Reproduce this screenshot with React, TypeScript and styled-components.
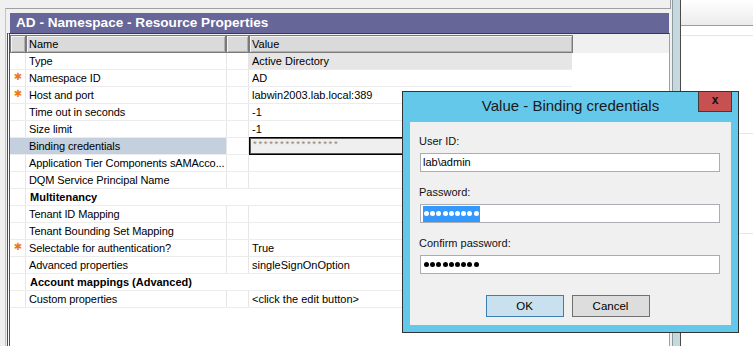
import styled, { createGlobalStyle } from "styled-components";

const GlobalStyle = createGlobalStyle`
  html, body {
    margin: 0;
    padding: 0;
  }
  body {
    font-family: "Liberation Sans", Arial, sans-serif;
    font-size: 11px;
    color: #000;
    background: #f0f0f0;
  }
`;

type Row = {
  name?: string;
  value?: string;
  group?: string;
  required?: boolean;
  readOnly?: boolean;
  selected?: boolean;
};

const ROWS: Row[] = [
  { name: "Type", value: "Active Directory", readOnly: true },
  { name: "Namespace ID", value: "AD", required: true },
  { name: "Host and port", value: "labwin2003.lab.local:389", required: true },
  { name: "Time out in seconds", value: "-1" },
  { name: "Size limit", value: "-1" },
  { name: "Binding credentials", value: "****************", selected: true },
  { name: "Application Tier Components sAMAcco..." },
  { name: "DQM Service Principal Name" },
  { group: "Multitenancy" },
  { name: "Tenant ID Mapping" },
  { name: "Tenant Bounding Set Mapping" },
  { name: "Selectable for authentication?", value: "True", required: true },
  { name: "Advanced properties", value: "singleSignOnOption" },
  { group: "Account mappings (Advanced)" },
  { name: "Custom properties", value: "<click the edit button>" },
];

const Screen = styled.div`
  position: relative;
  width: 753px;
  height: 346px;
  overflow: hidden;
  display: flex;
  background: #f0f0f0;
`;

const LeftPane = styled.div`
  width: 672px;
  display: flex;
  flex-direction: column;
`;

const TopStrip = styled.div`
  height: 8px;
  width: 670px;
  border-right: 1px solid #a0a0a0;
`;

const Panel = styled.div`
  flex: 1;
  margin-left: 5px;
  margin-right: 1px;
  padding: 4px 0 0 1px;
  border-top: 1px solid #a0a0a0;
  border-left: 1px solid #c4c4c4;
  display: flex;
  flex-direction: column;
  min-height: 0;
`;

const TitleBar = styled.div`
  height: 20px;
  margin: 0 2px 0 3px;
  padding-left: 6px;
  background: #666699;
  color: #fff;
  font-weight: bold;
  font-size: 13.6px;
  line-height: 20px;
`;

const Table = styled.div`
  flex: 1;
  margin-right: 1px;
  border-top: 1px solid #3c3c3c;
  border-left: 3px double #505050;
  border-right: 1px solid #a0a0a0;
  background: #fff;
`;

const HeaderRow = styled.div`
  display: flex;
  height: 19px;
  padding-top: 1px;
  box-sizing: border-box;
  background: #f0f0f0;
`;

const HeaderCell = styled.div<{ $w: number }>`
  width: ${(p) => p.$w}px;
  box-sizing: border-box;
  border: 1px solid #7a7a7a;
  box-shadow: inset 1px 1px 0 #f4f4f4, inset -1px -1px 0 #b0b0b0;
  background: #dadada;
  padding-left: 2px;
  line-height: 16px;
`;

const BodyRow = styled.div`
  display: flex;
  width: 562px;
  height: 17px;
  box-sizing: border-box;
  border-bottom: 1px solid #ececec;
`;

const Indicator = styled.div<{ $selected?: boolean }>`
  width: 16px;
  box-sizing: border-box;
  border-right: 1px solid ${(p) => (p.$selected ? "#c4d0dd" : "#e6e6e6")};
  background: ${(p) => (p.$selected ? "#c4d0dd" : "transparent")};
  color: #f27a12;
  font-family: "DejaVu Sans", sans-serif;
  font-size: 10px;
  line-height: 14px;
  text-align: center;
  padding-left: 1px;
`;

const NameCell = styled.div<{ $selected?: boolean }>`
  width: 201px;
  box-sizing: border-box;
  border-right: 1px solid #e6e6e6;
  background: ${(p) => (p.$selected ? "#c4d0dd" : "transparent")};
  padding-left: 3px;
  line-height: 16px;
  letter-spacing: -0.1px;
  white-space: nowrap;
  overflow: hidden;
`;

const SpacerCell = styled.div`
  width: 22px;
  box-sizing: border-box;
  border-right: 1px solid #e6e6e6;
`;

const ValueCell = styled.div<{ $readOnly?: boolean }>`
  width: 323px;
  box-sizing: border-box;
  background: ${(p) => (p.$readOnly ? "#e6e6e6" : "transparent")};
  padding-left: 3px;
  line-height: 16px;
  white-space: nowrap;
  overflow: hidden;
`;

const SecretCell = styled.div`
  width: 323px;
  height: 18px;
  margin-top: -1px;
  box-sizing: border-box;
  border: 1px solid #000;
  box-shadow: inset 0 0 0 1px #5a5a5a;
  background: #efefef;
  padding-left: 3px;
  color: #948573;
  font-size: 9.5px;
  letter-spacing: 1.7px;
  line-height: 12px;
`;

const GroupCell = styled.div`
  flex: 1;
  padding-left: 4px;
  font-weight: bold;
  line-height: 16px;
`;

const Splitter = styled.div`
  width: 7px;
  background: #c4d8de;
  border-left: 1px solid #8c9a9e;
  border-right: 1px solid #4a4a4a;
`;

const RightPane = styled.div`
  flex: 1;
  display: flex;
  flex-direction: column;
  background: #fff;
`;

const RightHeader = styled.div`
  height: 26px;
  box-sizing: border-box;
  border-bottom: 1px solid #9c9c9c;
  background: linear-gradient(#ffffff, #ebebeb);
`;

const ListLine = styled.div<{ $gap: number }>`
  margin-top: ${(p) => p.$gap}px;
  height: 1px;
  background: #dbe8f5;
`;

const Dialog = styled.div`
  position: absolute;
  left: 402px;
  top: 91px;
  width: 337px;
  height: 242px;
  box-sizing: border-box;
  border: 1px solid #333;
  background: #64c8ea;
  display: flex;
  flex-direction: column;
`;

const DialogTitle = styled.div`
  height: 30px;
  display: grid;
  grid-template-columns: 1fr auto 1fr;
  align-items: start;
`;

const DialogCaption = styled.div`
  grid-column: 2;
  font-size: 15px;
  line-height: 28px;
  color: #1a1a1a;
`;

const CloseButton = styled.div`
  grid-column: 3;
  justify-self: end;
  margin-right: 6px;
  width: 34px;
  height: 20px;
  box-sizing: border-box;
  background: #c75050;
  border: 1px solid #3c3c3c;
  border-top: none;
  color: #111;
  font-weight: bold;
  font-size: 12px;
  line-height: 16px;
  text-align: center;
`;

const ClientArea = styled.div`
  flex: 1;
  margin: 0 7px 7px 7px;
  background: #f0f0f0;
  padding: 13px 9px 0 9px;
  display: flex;
  flex-direction: column;
`;

const Field = styled.div<{ $first?: boolean }>`
  margin-top: ${(p) => (p.$first ? 0 : 14)}px;
  display: flex;
  flex-direction: column;
`;

const Label = styled.div`
  line-height: 13px;
  margin-bottom: 5px;
  color: #111;
`;

const Input = styled.div`
  width: 300px;
  height: 19px;
  margin-left: 1px;
  box-sizing: border-box;
  border: 1px solid #abadb3;
  background: #fff;
  padding: 1px 2px;
  display: flex;
  align-items: center;
  line-height: 15px;
`;

const DotRun = styled.div<{ $highlight?: boolean }>`
  display: flex;
  align-items: center;
  gap: 1.2px;
  height: 16px;
  padding: 0 1px;
  background: ${(p) => (p.$highlight ? "#3399ff" : "transparent")};
`;

const Dot = styled.span<{ $color: string }>`
  width: 5px;
  height: 5px;
  border-radius: 50%;
  background: ${(p) => p.$color};
`;

const ButtonRow = styled.div`
  margin-top: 21px;
  padding-right: 6px;
  display: flex;
  justify-content: center;
  gap: 8px;
`;

const Button = styled.div<{ $default?: boolean }>`
  width: 78px;
  height: 22px;
  box-sizing: border-box;
  border: 1px solid ${(p) => (p.$default ? "#3c7fb1" : "#707070")};
  background: ${(p) => (p.$default ? "#c9e0ef" : "#dddddd")};
  text-align: center;
  line-height: 20px;
  font-size: 11.5px;
`;

const Dots = ({ count, highlight }: { count: number; highlight?: boolean }) => (
  <DotRun $highlight={highlight}>
    {Array.from({ length: count }).map((_, i) => (
      <Dot key={i} $color={highlight ? "#fff" : "#000"} />
    ))}
  </DotRun>
);

const PropertyRow = ({ row }: { row: Row }) => {
  if (row.group) {
    return (
      <BodyRow>
        <Indicator />
        <GroupCell>{row.group}</GroupCell>
      </BodyRow>
    );
  }
  return (
    <BodyRow>
      <Indicator $selected={row.selected}>{row.required ? "✱" : ""}</Indicator>
      <NameCell $selected={row.selected}>{row.name}</NameCell>
      <SpacerCell />
      {row.selected ? (
        <SecretCell>{row.value}</SecretCell>
      ) : (
        <ValueCell $readOnly={row.readOnly}>{row.value}</ValueCell>
      )}
    </BodyRow>
  );
};

export default function App() {
  return (
    <>
      <GlobalStyle />
      <Screen>
        <LeftPane>
          <TopStrip />
          <Panel>
            <TitleBar>AD - Namespace - Resource Properties</TitleBar>
            <Table>
              <HeaderRow>
                <HeaderCell $w={16} />
                <HeaderCell $w={200}>Name</HeaderCell>
                <HeaderCell $w={23} />
                <HeaderCell $w={324}>Value</HeaderCell>
              </HeaderRow>
              {ROWS.map((row, i) => (
                <PropertyRow key={i} row={row} />
              ))}
            </Table>
          </Panel>
        </LeftPane>
        <Splitter />
        <RightPane>
          <RightHeader />
          <ListLine $gap={9} />
          <ListLine $gap={97} />
          <ListLine $gap={99} />
        </RightPane>

        <Dialog>
          <DialogTitle>
            <DialogCaption>Value - Binding credentials</DialogCaption>
            <CloseButton>x</CloseButton>
          </DialogTitle>
          <ClientArea>
            <Field $first>
              <Label>User ID:</Label>
              <Input>{"lab\\admin"}</Input>
            </Field>
            <Field>
              <Label>Password:</Label>
              <Input>
                <Dots count={9} highlight />
              </Input>
            </Field>
            <Field>
              <Label>Confirm password:</Label>
              <Input>
                <Dots count={9} />
              </Input>
            </Field>
            <ButtonRow>
              <Button $default>OK</Button>
              <Button>Cancel</Button>
            </ButtonRow>
          </ClientArea>
        </Dialog>
      </Screen>
    </>
  );
}
